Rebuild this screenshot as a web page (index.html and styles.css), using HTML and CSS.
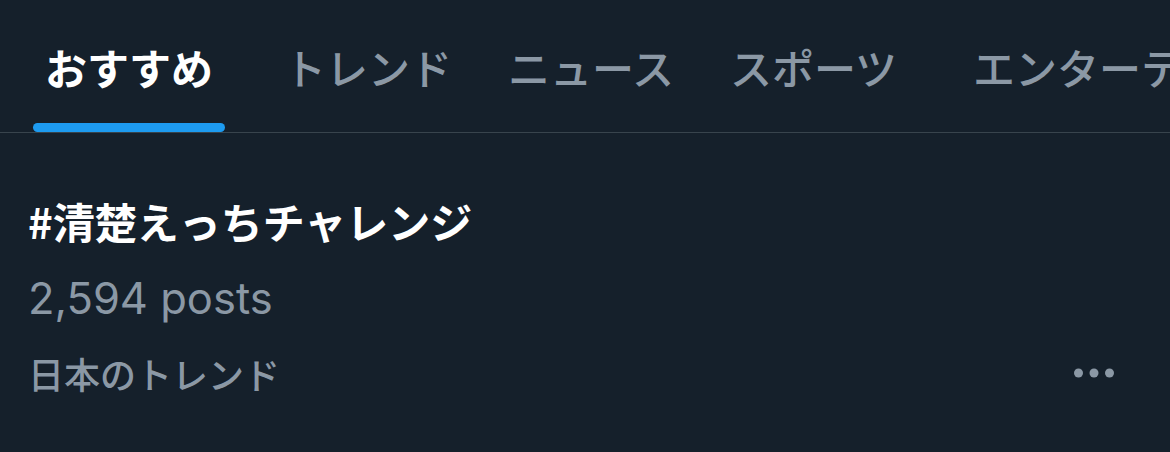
FILE: index.html
```html
<!DOCTYPE html>
<html lang="ja">
  <head>
    <meta charset="UTF-8" />
    <title>トレンド</title>
    <link rel="stylesheet" href="styles.css">
  </head>
  <body>
    <nav class="tabs">
      <div class="tab active">
        <span class="tab-label">おすすめ</span>
        <span class="tab-indicator"></span>
      </div>
      <div class="tab">
        <span class="tab-label">トレンド</span>
        <span class="tab-indicator"></span>
      </div>
      <div class="tab">
        <span class="tab-label">ニュース</span>
        <span class="tab-indicator"></span>
      </div>
      <div class="tab tab-wide">
        <span class="tab-label">スポーツ</span>
        <span class="tab-indicator"></span>
      </div>
      <div class="tab">
        <span class="tab-label">エンターテイメント</span>
        <span class="tab-indicator"></span>
      </div>
    </nav>

    <div class="trend">
      <div class="trend-title">#清楚えっちチャレンジ</div>
      <div class="trend-count">2,594 posts</div>
      <div class="trend-meta">
        <span class="trend-context">日本のトレンド</span>
        <svg class="more" width="40" height="10" viewBox="0 0 40 10">
          <circle cx="4.5" cy="5" r="4.5" />
          <circle cx="20" cy="5" r="4.5" />
          <circle cx="35.5" cy="5" r="4.5" />
        </svg>
      </div>
    </div>
  </body>
</html>
```

FILE: styles.css
```css
body {
  margin: 0;
  background-color: #15202b;
  font-family: "Noto Sans CJK JP", sans-serif;
  color: #8b98a5;
  overflow: hidden;
}
.tabs {
  display: flex;
  height: 132px;
  border-bottom: 1px solid #38444d;
  padding-left: 33px;
  gap: 32px;
  white-space: nowrap;
  overflow: hidden;
}
.tab {
  display: flex;
  flex-direction: column;
  align-items: stretch;
  padding-top: 40px;
  flex-shrink: 0;
}
.tab-label {
  font-size: 42px;
  line-height: 54px;
  font-weight: 500;
  padding: 0 12px;
  text-align: center;
}
.tab.active {
  margin-right: 15px;
}
.tab-wide {
  margin-right: 20px;
}
.tab-indicator {
  margin-top: 29px;
  height: 9px;
  border-radius: 5px;
}
.tab.active .tab-label {
  color: #ffffff;
  font-weight: 700;
}
.tab.active .tab-indicator {
  background-color: #1d9bf0;
}
.trend {
  padding: 60px 56px 0 28px;
}
.trend-title {
  font-size: 42px;
  line-height: 56px;
  font-weight: 700;
  color: #ffffff;
}
.trend-count {
  font-family: "Inter", "Liberation Sans", sans-serif;
  font-size: 43.5px;
  line-height: 56px;
  margin-top: 21px;
}
.trend-meta {
  display: flex;
  justify-content: space-between;
  align-items: center;
  margin-top: 22px;
  height: 50px;
}
.trend-context {
  font-size: 36px;
  font-weight: 500;
}
.more {
  fill: #8b98a5;
}
```
